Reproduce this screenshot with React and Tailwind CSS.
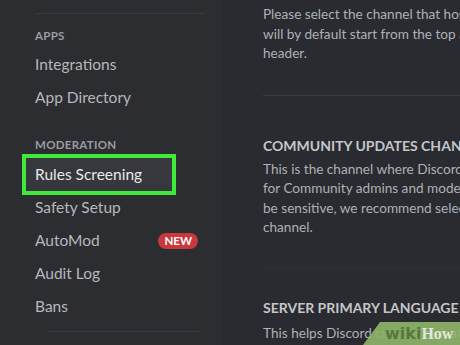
const appsItems = ['Integrations', 'App Directory']

const modItems = [
  { label: 'Rules Screening', selected: true },
  { label: 'Safety Setup' },
  { label: 'AutoMod', badge: 'NEW' },
  { label: 'Audit Log' },
  { label: 'Bans' },
]

function NavRow({ label, selected, badge }) {
  if (selected) {
    return (
      <div className="h-[33px] flex items-center">
        <div className="w-[146px] h-[33px] flex items-center pl-[9px] bg-[#36383d] text-[#e6e7e9] outline-4 outline-[#3fea3a]">
          {label}
        </div>
      </div>
    )
  }
  return (
    <div className="h-[33px] flex items-center justify-between pl-[9px] text-[#b5b8bd]">
      <span>{label}</span>
      {badge && (
        <span className="mr-[2px] rounded-full bg-[#c8383c] px-[6px] text-[11.5px] leading-[16px] font-bold text-white">
          {badge}
        </span>
      )}
    </div>
  )
}

function Sidebar() {
  return (
    <div className="w-[222px] shrink-0 bg-[#2c2d31] pt-[13px] text-[15.5px]">
      <div className="ml-[36px] mr-[17px] h-px bg-[#3a3c41]" />
      <div className="pl-[26px] pr-[22px]">
        <div className="mt-[14px] mb-[4px] pl-[9px] text-[11.5px] leading-[16px] font-bold tracking-wide text-[#9a9ca1]">APPS</div>
        {appsItems.map(item => (
          <NavRow key={item} label={item} />
        ))}
        <div className="mt-[23px] mb-[5px] pl-[9px] text-[11.5px] leading-[16px] font-bold tracking-wide text-[#9a9ca1]">MODERATION</div>
        {modItems.map(item => (
          <NavRow key={item.label} {...item} />
        ))}
      </div>
      <div className="mt-[8px] ml-[48px] mr-[22px] h-px bg-[#36383d]" />
    </div>
  )
}

function Lines({ lines }) {
  return (
    <div className="text-[13.6px] leading-[19.5px] text-[#adb0b5]">
      {lines.map((l, i) => (
        <div key={i} className="whitespace-nowrap">{l}</div>
      ))}
    </div>
  )
}

function Main() {
  return (
    <div className="flex-1 min-w-0 overflow-hidden bg-[#292b30] pl-[41px] pt-[5px]">
      <Lines
        lines={[
          'Please select the channel that hosts your rules and guidelines. Screening',
          'will by default start from the top and include text from the channel',
          'header.',
        ]}
      />
      <div className="mt-[31px] h-px bg-[#3a3c42]" />
      <div className="mt-[42px] text-[14px] leading-[16px] font-bold text-[#c4c6c9] whitespace-nowrap">COMMUNITY UPDATES CHANNEL</div>
      <div className="mt-[6px]">
        <Lines
          lines={[
            'This is the channel where Discord will send messages relevant',
            'for Community admins and moderators. Because some of these may',
            'be sensitive, we recommend selecting a moderator-only',
            'channel.',
          ]}
        />
      </div>
      <div className="mt-[29px] h-px bg-[#2d2f34]" />
      <div className="mt-[32px] text-[14px] leading-[16px] font-bold text-[#c4c6c9] whitespace-nowrap">SERVER PRIMARY LANGUAGE</div>
      <div className="mt-[8px]">
        <Lines lines={['This helps Discord customize features for your server.']} />
      </div>
    </div>
  )
}

function Watermark() {
  return (
    <div className="absolute right-0 bottom-0 w-[97px] h-[23px]">
      <svg className="absolute inset-0" width="97" height="23" viewBox="0 0 97 23">
        <polygon points="17,0 97,0 97,23 0,23" fill="#8db36a" fillOpacity="0.92" />
      </svg>
      <div className="absolute left-[22px] top-[2px] flex items-baseline text-[16px] leading-[20px] font-bold" style={{ fontFamily: '"DejaVu Sans", sans-serif' }}>
        <span className="text-[#56783a]">wiki</span>
        <span className="text-[#e3e6dc]" style={{ fontFamily: '"Liberation Serif", serif' }}>How</span>
      </div>
    </div>
  )
}

export default function App() {
  return (
    <div className="relative w-[460px] h-[345px] overflow-hidden flex" style={{ fontFamily: 'Lato, "Noto Sans", sans-serif' }}>
      <Sidebar />
      <Main />
      <Watermark />
    </div>
  )
}
